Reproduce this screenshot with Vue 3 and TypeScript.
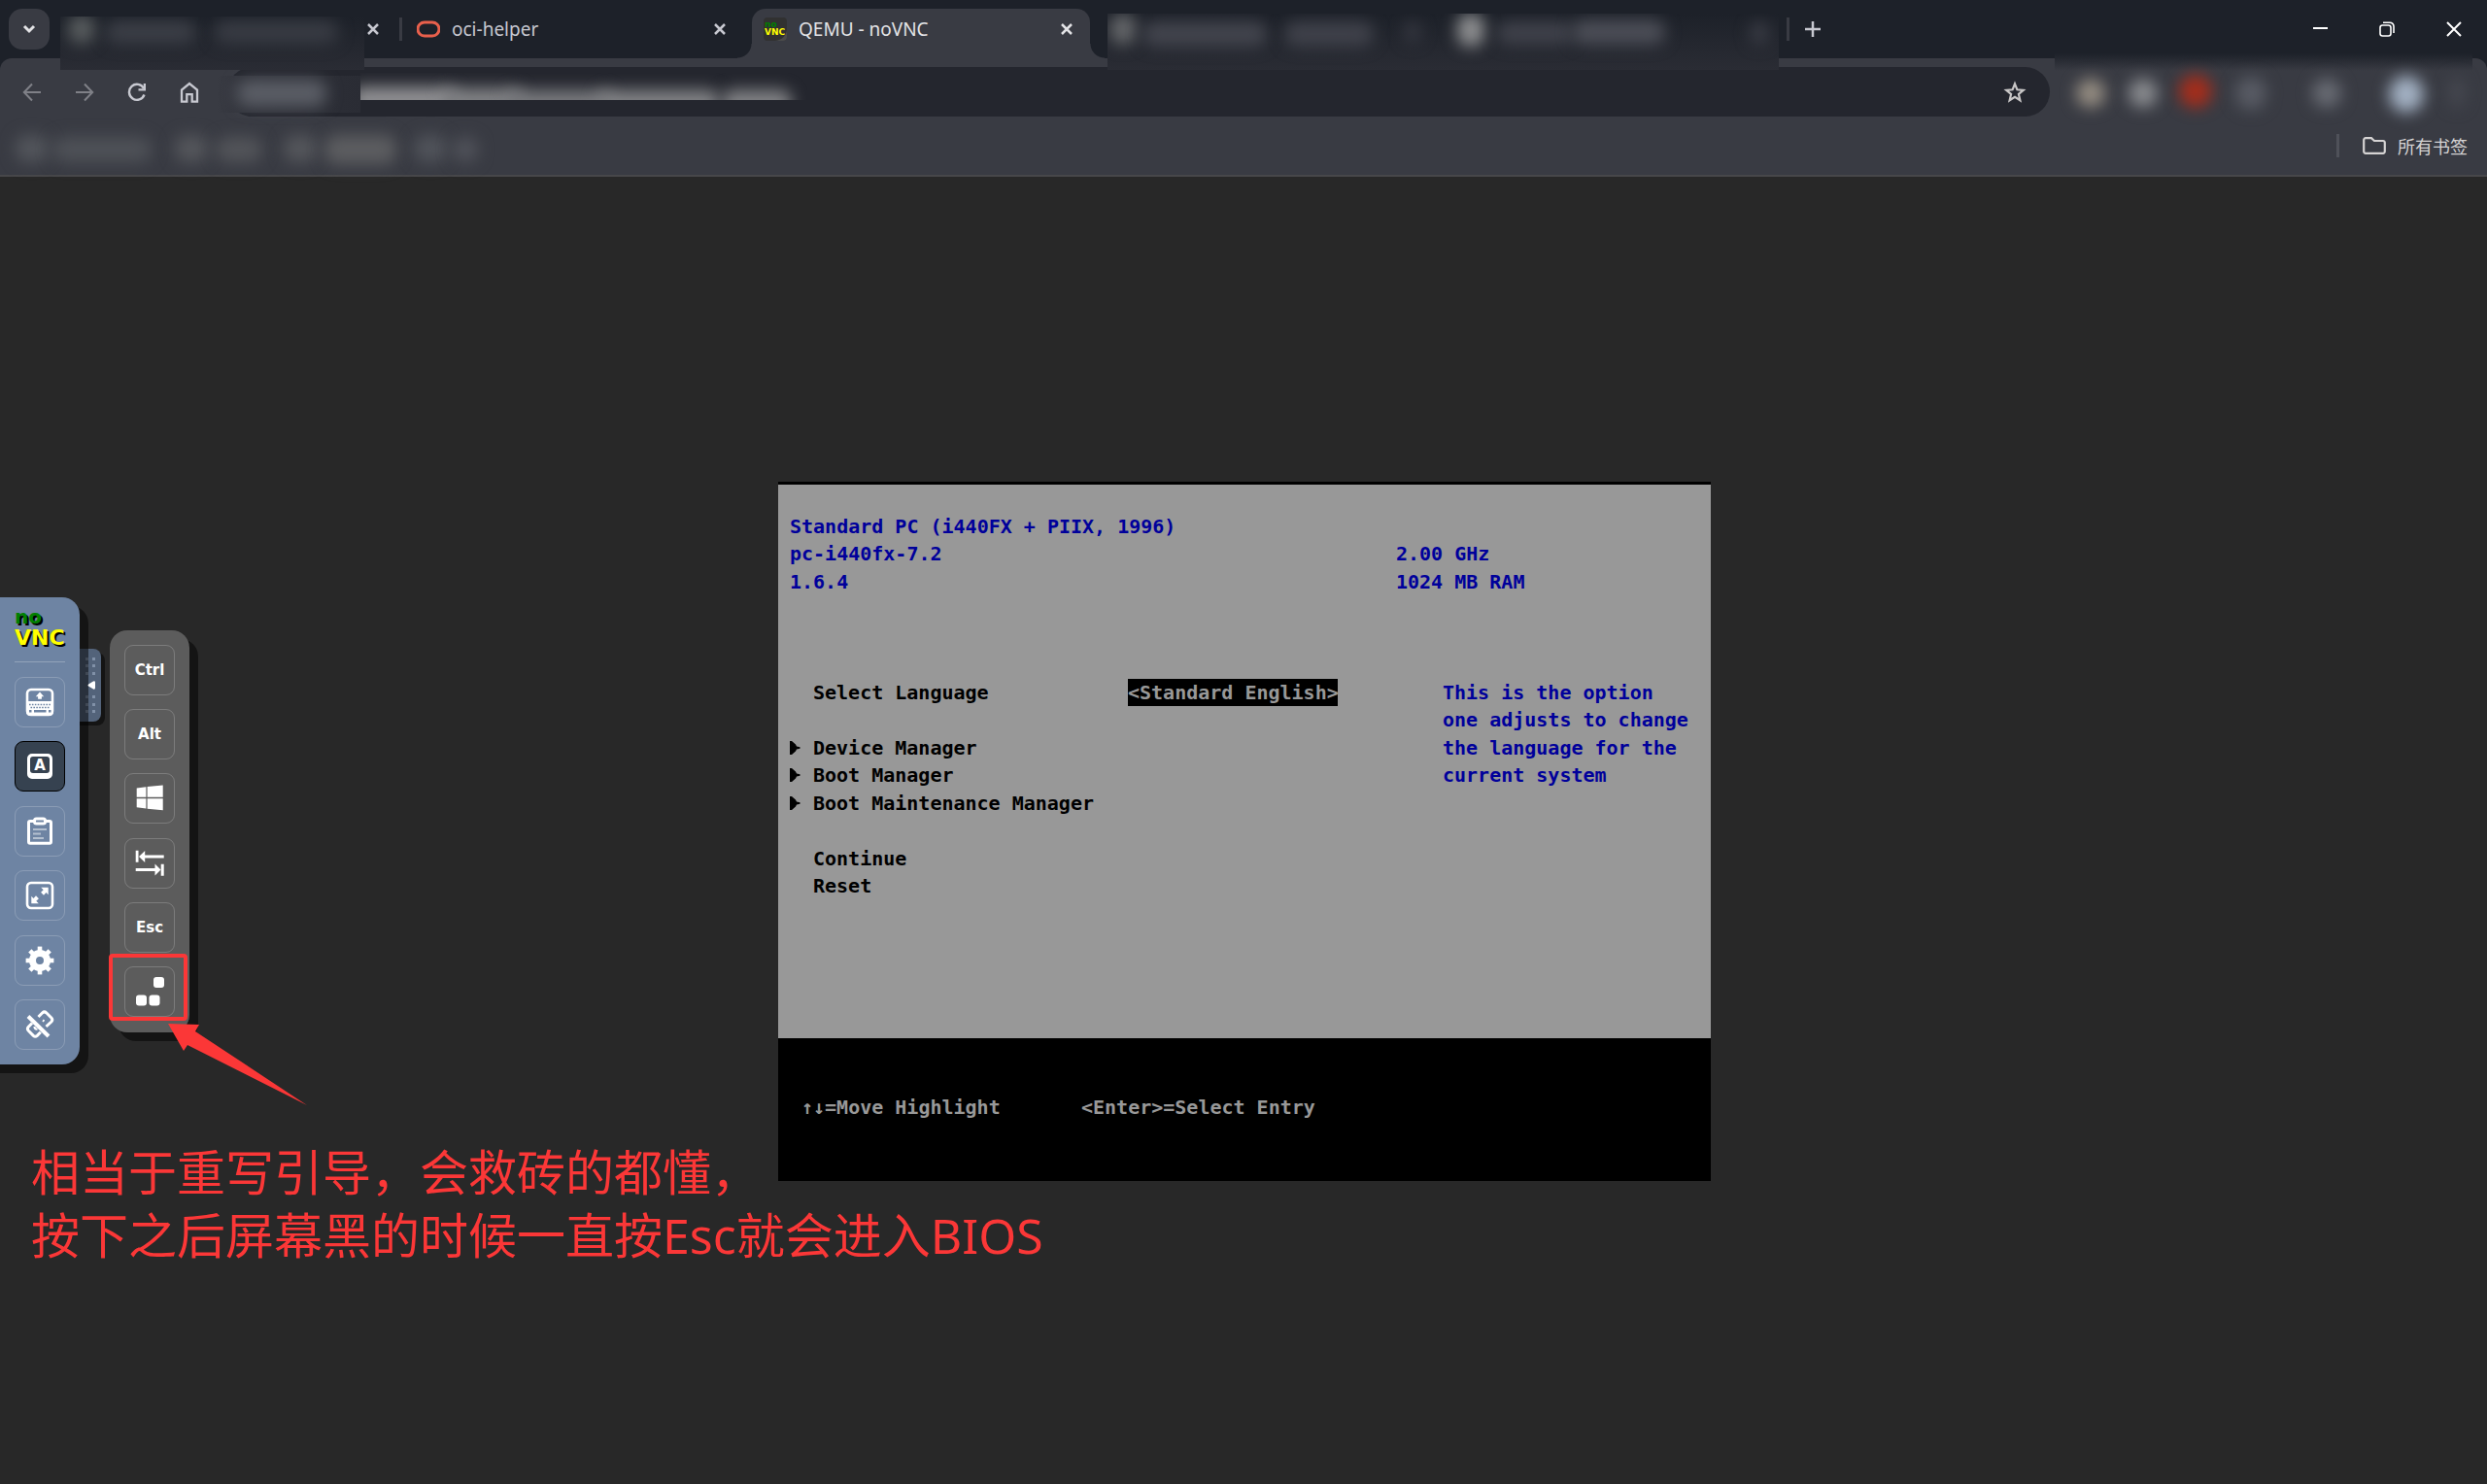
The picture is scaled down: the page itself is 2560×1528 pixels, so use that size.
<script setup lang="ts">
interface Tab {
  id: string
  title: string
  icon: 'none' | 'oracle' | 'novnc'
  active?: boolean
  separator?: boolean
  closable?: boolean
}

interface Cell {
  row: number
  col: number
  text: string
  tone: 'info' | 'item' | 'selected' | 'hint'
}

interface Smudge {
  left: number
  top: number
  width: number
  height: number
  color: string
}

const tabs: Tab[] = [
  { id: 'first', title: '', icon: 'none', separator: true, closable: true },
  { id: 'oci', title: 'oci-helper', icon: 'oracle', closable: true },
  { id: 'vnc', title: 'QEMU - noVNC', icon: 'novnc', active: true, closable: true },
  { id: 'fourth', title: '', icon: 'none' },
  { id: 'fifth', title: '', icon: 'none', separator: true },
]

const cells: Cell[] = [
  { row: 1, col: 1, text: 'Standard PC (i440FX + PIIX, 1996)', tone: 'info' },
  { row: 2, col: 1, text: 'pc-i440fx-7.2', tone: 'info' },
  { row: 2, col: 53, text: '2.00 GHz', tone: 'info' },
  { row: 3, col: 1, text: '1.6.4', tone: 'info' },
  { row: 3, col: 53, text: '1024 MB RAM', tone: 'info' },
  { row: 7, col: 3, text: 'Select Language', tone: 'item' },
  { row: 7, col: 30, text: '<Standard English>', tone: 'selected' },
  { row: 7, col: 57, text: 'This is the option', tone: 'info' },
  { row: 8, col: 57, text: 'one adjusts to change', tone: 'info' },
  { row: 9, col: 57, text: 'the language for the', tone: 'info' },
  { row: 10, col: 57, text: 'current system', tone: 'info' },
  { row: 9, col: 3, text: 'Device Manager', tone: 'item' },
  { row: 10, col: 3, text: 'Boot Manager', tone: 'item' },
  { row: 11, col: 3, text: 'Boot Maintenance Manager', tone: 'item' },
  { row: 13, col: 3, text: 'Continue', tone: 'item' },
  { row: 14, col: 3, text: 'Reset', tone: 'item' },
  { row: 22, col: 2, text: '↑↓=Move Highlight', tone: 'hint' },
  { row: 22, col: 26, text: '<Enter>=Select Entry', tone: 'hint' },
]

const markers: number[] = [9, 10, 11]

const firstTabSmudges: Smudge[] = [
  { left: 8, top: -2, width: 28, height: 30, color: '#575b5d' },
  { left: 46, top: 4, width: 94, height: 24, color: '#3b3e46' },
  { left: 158, top: 4, width: 128, height: 24, color: '#383b43' },
]

const lastTabsSmudges: Smudge[] = [
  { left: 2, top: 0, width: 28, height: 32, color: '#626467' },
  { left: 36, top: 8, width: 128, height: 26, color: '#42444d' },
  { left: 182, top: 8, width: 92, height: 26, color: '#3f414a' },
  { left: 306, top: 8, width: 16, height: 22, color: '#363841' },
  { left: 360, top: 0, width: 28, height: 34, color: '#8c8d8f' },
  { left: 400, top: 8, width: 80, height: 24, color: '#3f414a' },
  { left: 478, top: 6, width: 96, height: 26, color: '#4b4d56' },
  { left: 662, top: 8, width: 18, height: 24, color: '#3a3c45' },
]

const extensionSmudges: Smudge[] = [
  { left: 22, top: 26, width: 30, height: 30, color: '#958d82' },
  { left: 76, top: 26, width: 30, height: 30, color: '#898b8f' },
  { left: 128, top: 22, width: 34, height: 34, color: '#a52d1b' },
  { left: 186, top: 24, width: 32, height: 34, color: '#585b64' },
  { left: 265, top: 26, width: 30, height: 30, color: '#686b73' },
  { left: 344, top: 23, width: 36, height: 38, color: '#a2b0c2' },
  { left: 406, top: 24, width: 16, height: 32, color: '#474951' },
]

const bookmarkSmudges: Smudge[] = [
  { left: 4, top: 8, width: 34, height: 28, color: '#52555b' },
  { left: 42, top: 10, width: 102, height: 26, color: '#4e5157' },
  { left: 168, top: 8, width: 34, height: 28, color: '#54565b' },
  { left: 210, top: 10, width: 48, height: 26, color: '#525459' },
  { left: 280, top: 8, width: 34, height: 28, color: '#54565b' },
  { left: 322, top: 8, width: 74, height: 30, color: '#5c5d60' },
  { left: 414, top: 8, width: 34, height: 28, color: '#50535a' },
  { left: 454, top: 10, width: 26, height: 26, color: '#50525a' },
]

const addressSmudges: Smudge[] = [
  { left: -10, top: 14, width: 110, height: 28, color: '#8f8f92' },
  { left: 84, top: 15, width: 84, height: 28, color: '#808184' },
  { left: 150, top: 17, width: 110, height: 28, color: '#77787c' },
  { left: 244, top: 17, width: 126, height: 28, color: '#808184' },
  { left: 372, top: 17, width: 72, height: 28, color: '#808184' },
]

const dotRows: number[] = [9, 16, 24, 48, 56, 63]
const teeth: number[] = [0, 45, 90, 135, 180, 225, 270, 315]

function smudgeStyle(s: Smudge) {
  return {
    left: `${s.left}px`,
    top: `${s.top}px`,
    width: `${s.width}px`,
    height: `${s.height}px`,
    background: s.color,
  }
}

function cellStyle(c: Cell) {
  return { gridRow: `${c.row + 1}`, gridColumn: `${c.col + 1} / span ${c.text.length}` }
}
</script>

<template>
  <div class="window">
    <header class="browser">
      <div class="tabstrip">
        <button class="tab-search" aria-label="Search tabs">
          <svg width="14" height="10" viewBox="0 0 14 10"><path d="M2 2l5 5 5-5" fill="none" stroke="#e3e3e6" stroke-width="3" /></svg>
        </button>
        <div class="tabs">
          <div v-for="tab in tabs" :key="tab.id" class="tab" :class="{ active: tab.active, separated: tab.separator }">
            <svg v-if="tab.icon === 'oracle'" class="favicon" viewBox="0 0 24 24">
              <rect x="1" y="5" width="22" height="14" rx="7" fill="none" stroke="#e8604c" stroke-width="3" />
            </svg>
            <svg v-else-if="tab.icon === 'novnc'" class="favicon" viewBox="0 0 24 24">
              <rect width="24" height="24" rx="4" fill="#313131" />
              <path d="M24 13v7a4 4 0 0 1-4 4h-8c7-1 11-5 12-11z" fill="#4b4b4b" />
              <text x="1" y="10" class="mark-small" fill="#008000">no</text>
              <text x="1" y="18" class="mark-small" fill="#ffff00">VNC</text>
            </svg>
            <span v-else class="favicon"></span>
            <span class="tab-title">{{ tab.title }}</span>
            <button v-if="tab.closable" class="tab-close" aria-label="Close tab">
              <svg width="12" height="12" viewBox="0 0 12 12"><path d="M1 1l10 10M11 1L1 11" fill="none" stroke="currentColor" stroke-width="2.500" /></svg>
            </button>
          </div>
        </div>
        <button class="new-tab" aria-label="New tab">
          <svg width="16" height="16" viewBox="0 0 16 16"><path d="M8 0v16M0 8h16" stroke="#c7c8d0" stroke-width="2.500" /></svg>
        </button>
        <div class="window-controls">
          <button aria-label="Minimize">
            <svg width="16" height="16" viewBox="0 0 16 16"><path d="M1 7h15" stroke="#fff" stroke-width="2" /></svg>
          </button>
          <button aria-label="Restore">
            <svg width="16" height="16" viewBox="0 0 16 16" fill="none" stroke="#fff" stroke-width="1.600">
              <rect x="1" y="4" width="11" height="11" rx="2.500" />
              <path d="M4 1.200h7a4 4 0 0 1 4 4V12" />
            </svg>
          </button>
          <button aria-label="Close">
            <svg width="16" height="16" viewBox="0 0 16 16"><path d="M1 1l14 14M15 1L1 15" stroke="#fff" stroke-width="2" /></svg>
          </button>
        </div>
        <div class="veil veil-first"><i v-for="(s, i) in firstTabSmudges" :key="i" :style="smudgeStyle(s)"></i></div>
        <div class="veil veil-last"><i v-for="(s, i) in lastTabsSmudges" :key="i" :style="smudgeStyle(s)"></i></div>
      </div>

      <div class="toolbar">
        <button class="nav" aria-label="Back">
          <svg width="20" height="20" viewBox="0 0 20 20" fill="none" stroke="#7f8087" stroke-width="2"><path d="M19 10H2M10 1.500L1.800 10l8.200 8.500" /></svg>
        </button>
        <button class="nav" aria-label="Forward">
          <svg width="20" height="20" viewBox="0 0 20 20" fill="none" stroke="#7f8087" stroke-width="2"><path d="M1 10h17M10 1.500L18.200 10 10 18.500" /></svg>
        </button>
        <button class="nav" aria-label="Reload">
          <svg width="20" height="20" viewBox="0 0 20 20"><path d="M17.500 12.500A8 8 0 1 1 17 6" fill="none" stroke="#c7c8d0" stroke-width="2.400" /><path d="M19 1v7.500h-7.500V6.300h5.200V1z" fill="#c7c8d0" /></svg>
        </button>
        <button class="nav" aria-label="Home">
          <svg width="20" height="22" viewBox="0 0 20 22"><path d="M2 20.700V8.500L10 2l8 6.500v12.200h-5.300v-7.500H7.300v7.500z" fill="none" stroke="#c7c8d0" stroke-width="2.300" /></svg>
        </button>
        <div class="omnibox">
          <div class="site-veil"><i></i></div>
          <div class="address-veil"><i v-for="(s, i) in addressSmudges" :key="i" :style="smudgeStyle(s)"></i></div>
          <input class="address" type="text" aria-label="Address" />
          <button class="star" aria-label="Bookmark this tab">
            <svg width="24" height="24" viewBox="0 0 24 24"><path d="M12 3.300l2.400 6 6.400.5-4.900 4.200 1.500 6.300L12 16.900l-5.400 3.400L8.100 14 3.200 9.800l6.400-.5z" fill="none" stroke="#c8c6c6" stroke-width="2.200" /></svg>
          </button>
        </div>
        <div class="extensions"><i v-for="(s, i) in extensionSmudges" :key="i" :style="smudgeStyle(s)"></i></div>
      </div>

      <nav class="bookmarks">
        <div class="bookmark-veil"><i v-for="(s, i) in bookmarkSmudges" :key="i" :style="smudgeStyle(s)"></i></div>
        <a class="all-bookmarks" href="#">
          <svg width="24" height="18" viewBox="0 0 24 18"><path d="M1.200 3A1.800 1.800 0 0 1 3 1.200h6L12 4h9a1.800 1.800 0 0 1 1.800 1.800V15a1.800 1.800 0 0 1-1.800 1.800H3A1.800 1.800 0 0 1 1.200 15z" fill="none" stroke="#d5d3d3" stroke-width="2.200" /></svg>
          <span>所有书签</span>
        </a>
      </nav>
    </header>

    <main class="session">
      <section class="console" aria-label="Firmware setup">
        <span v-for="row in markers" :key="row" class="marker" :style="{ gridRow: `${row + 1}` }">
          <svg width="11" height="16" viewBox="0 0 11 16"><path d="M0 1h2l4 3.500 1 2 3.500.8v1.400L7 9.500l-1 2L2 15H0z" /></svg>
        </span>
        <span v-for="(c, i) in cells" :key="i" class="cell" :class="c.tone" :style="cellStyle(c)">{{ c.text }}</span>
      </section>

      <aside class="overlay">
        <div class="dock">
          <div class="control-bar">
            <div class="logo">
              <span class="logo-no">no</span>
              <span class="logo-vnc">VNC</span>
            </div>
            <div class="buttons">
              <button class="key" aria-label="Keyboard">
                <svg viewBox="0 0 30 30">
                  <rect x="2" y="2" width="26" height="26" rx="4" fill="none" stroke="#fff" stroke-width="2.600" />
                  <path d="M1 14h28v11a4 4 0 0 1-4 4H5a4 4 0 0 1-4-4z" fill="#fff" />
                  <path d="M15 4.500l4.200 4.700h-2.300v2.600h-3.800V9.200h-2.300z" fill="#fff" />
                  <path d="M4 17.500h23M5.500 20.500h20" stroke="#6e84a3" stroke-width="1.400" stroke-dasharray="1.600 1.300" />
                  <path d="M4 24.300h2.500M9 24.300h12.500M24 24.300h2.500" stroke="#6e84a3" stroke-width="2.400" />
                </svg>
              </button>
              <button class="key pressed" aria-label="Extra keys">
                <svg viewBox="0 0 30 30">
                  <path fill-rule="evenodd" d="M7 2h16a5 5 0 0 1 5 5v16a5 5 0 0 1-5 5H7a5 5 0 0 1-5-5V7a5 5 0 0 1 5-5zm1 3a3 3 0 0 0-3 3v11a3 3 0 0 0 3 3h14a3 3 0 0 0 3-3V8a3 3 0 0 0-3-3z" fill="#fff" />
                  <text x="15" y="19" class="key-letter">A</text>
                </svg>
              </button>
              <button class="key" aria-label="Clipboard">
                <svg viewBox="0 0 30 30" fill="none" stroke="#fff">
                  <rect x="3.500" y="4.500" width="23" height="22.800" rx="1.500" stroke-width="3" />
                  <rect x="9.500" y="2" width="11" height="5" rx="2" fill="#6e84a3" stroke-width="3" />
                  <path d="M8 13h14M8 17.500h8M8 22h11" stroke="#b4c0d0" stroke-width="2" />
                </svg>
              </button>
              <button class="key" aria-label="Fullscreen">
                <svg viewBox="0 0 30 30">
                  <rect x="2" y="2" width="26" height="26" rx="4" fill="none" stroke="#fff" stroke-width="2.600" />
                  <path d="M16.200 6.700h7.500v7.500l-2.200-2.200-2.500 2.700-2.900-2.900 2.600-2.600z" fill="#fff" />
                  <path d="M13.800 23.300H6.300v-7.500l2.200 2.200 2.500-2.700 2.900 2.900-2.600 2.600z" fill="#fff" />
                </svg>
              </button>
              <button class="key" aria-label="Settings">
                <svg viewBox="0 0 30 30">
                  <circle cx="15" cy="15" r="7.500" fill="none" stroke="#fff" stroke-width="7" />
                  <rect v-for="a in teeth" :key="a" x="12.700" y="0.600" width="4.600" height="5" fill="#fff" :transform="`rotate(${a} 15 15)`" />
                </svg>
              </button>
              <button class="key" aria-label="Disconnect">
                <svg viewBox="0 0 30 30" fill="none" stroke="#fff">
                  <path d="M13.500 7l4.200-4.200q2-1.800 4 0l5.200 5.200q1.800 2 0 4L21.500 17" stroke-width="3" />
                  <path d="M7 13.500l-3.700 3.800q-1.800 2 0 4l5 5q2 1.800 4 0l3.500-3.600" stroke-width="3" />
                  <path d="M18 10.500l1.500 1M9.500 17q0 3 3 2.500" stroke-width="2.200" />
                  <path d="M3 6.500l21 20.500" stroke-width="4" />
                </svg>
              </button>
            </div>
          </div>
          <button class="handle" aria-label="Hide control bar">
            <svg width="22" height="75" viewBox="0 0 22 75">
              <g fill="#8191a8">
                <template v-for="y in dotRows" :key="y">
                  <rect x="6" :y="y" width="3" height="3" />
                  <rect x="13" :y="y" width="3" height="3" />
                </template>
              </g>
            </svg>
          </button>
          <svg class="handle-arrow" width="8" height="9" viewBox="0 0 8 9"><path d="M1.500 3.200L6 .5q2-.8 2 1.200v5.600q0 2-2 1.200L1.500 5.800q-2-1.300 0-2.600z" fill="#fff" /></svg>
        </div>

        <div class="key-panel">
          <div class="buttons">
            <button class="key">Ctrl</button>
            <button class="key">Alt</button>
            <button class="key" aria-label="Windows">
              <svg viewBox="0 0 30 30" fill="#fff"><path d="M1.700 4.600l9.700-1.300v10.500H1.700zM12.600 3.100l16.100-1.700v12.400H12.600zM1.700 15.200h9.700v10.400l-9.700-1.300zM12.600 15.200h16.100v12l-16.100-1.500z" /></svg>
            </button>
            <button class="key" aria-label="Tab">
              <svg viewBox="0 0 30 30" fill="#fff"><path d="M.7 1.700h2.800v12H.7zM4 8l6.200-6v4.500h19.500v3H10.200V14zM26.700 15.700h3v12h-3zM26.500 21.500l-6-6v4.500H.7v3h19.800v4.500z" /></svg>
            </button>
            <button class="key">Esc</button>
            <button class="key" aria-label="Ctrl+Alt+Del">
              <svg viewBox="0 0 30 30" fill="#fff"><rect x="19" y="0" width="11" height="11" rx="3" /><rect x="1" y="18.500" width="11" height="11" rx="3" /><rect x="14.500" y="18.500" width="11" height="11" rx="3" /></svg>
            </button>
          </div>
          <div class="callout-box"></div>
          <svg class="callout-arrow" width="144" height="85" viewBox="0 0 144 85"><path d="M0 0l32 1-4 7 115 76L20 22l-4 6z" fill="#fb3737" /></svg>
        </div>
      </aside>

      <p class="note">相当于重写引导，会救砖的都懂，<br />按下之后屏幕黑的时候一直按Esc就会进入BIOS</p>
    </main>
  </div>
</template>

<style>
body {
  margin: 0;
  background: #282828;
}
</style>

<style scoped>
.window {
  display: flex;
  flex-direction: column;
  min-height: 100vh;
  overflow: hidden;
  background: #282828;
  font-family: "Noto Sans", "Noto Sans CJK SC", sans-serif;
}

button {
  padding: 0;
  border: 0;
  background: none;
  color: inherit;
  display: flex;
  align-items: center;
  justify-content: center;
}

.browser {
  background: #1d2129;
}

.tabstrip {
  position: relative;
  display: flex;
  align-items: center;
  height: 60px;
  padding-left: 9px;
}

.tab-search {
  width: 42px;
  height: 42px;
  border-radius: 14px;
  background: #393b43;
}

.tabs {
  display: flex;
  align-self: stretch;
  gap: 9px;
  padding: 9px 9px 0;
}

.tab {
  position: relative;
  display: flex;
  align-items: center;
  gap: 12px;
  width: 348px;
  box-sizing: border-box;
  padding: 0 18px 9px 12px;
  border-radius: 14px 14px 0 0;
  color: #c7c8d0;
  font-size: 19px;
  line-height: 24px;
}

.tab.active {
  background: #393b43;
  color: #e3e3e6;
}

.tab.active::before,
.tab.active::after {
  content: "";
  position: absolute;
  bottom: 0;
  width: 15px;
  height: 15px;
}

.tab.active::before {
  right: 100%;
  background: radial-gradient(circle at 0 0, transparent 14px, #393b43 15px);
}

.tab.active::after {
  left: 100%;
  background: radial-gradient(circle at 100% 0, transparent 14px, #393b43 15px);
}

.tab.separated::after {
  content: "";
  position: absolute;
  left: 351px;
  top: 9px;
  width: 3px;
  height: 24px;
  background: #393b43;
}

.favicon {
  width: 24px;
  height: 24px;
  flex: none;
}

.tab-title {
  flex: 1;
  white-space: nowrap;
}

.tab-close {
  width: 12px;
  height: 24px;
}

.new-tab {
  width: 42px;
  height: 42px;
}

.window-controls {
  display: flex;
  align-self: stretch;
  margin-left: auto;
}

.window-controls button {
  width: 69px;
}

.mark-small {
  font: bold 9px/9px "DejaVu Sans", sans-serif;
}

.veil {
  position: absolute;
  z-index: 2;
  overflow: hidden;
  background: linear-gradient(#1d2129 0, #24272f 30px, #2a2c34 100%);
}

.veil-first {
  left: 62px;
  top: 17px;
  width: 313px;
  height: 55px;
}

.veil-last {
  left: 1140px;
  top: 14px;
  width: 691px;
  height: 58px;
}

.veil i,
.extensions i,
.bookmark-veil i,
.address-veil i,
.site-veil i {
  position: absolute;
  border-radius: 12px;
  filter: blur(8px);
}

.toolbar {
  display: flex;
  align-items: center;
  height: 51px;
  padding: 9px 15px;
  border-radius: 12px 12px 0 0;
  background: #393b43;
}

.nav {
  width: 36px;
  height: 36px;
  margin-right: 18px;
}

.omnibox {
  position: relative;
  flex: 1;
  display: flex;
  align-items: center;
  height: 51px;
  margin-left: 3px;
  border-radius: 26px;
  background: #24262e;
}

.address {
  flex: 1;
  height: 36px;
  margin-left: 24px;
  border: 0;
  outline: 0;
  background: transparent;
  color: #e3e3e6;
  font: 18px/24px "Noto Sans", sans-serif;
}

.star {
  width: 36px;
  height: 36px;
  margin-right: 18px;
}

.site-veil {
  position: absolute;
  left: -10px;
  top: 9px;
  width: 147px;
  height: 38px;
  background: linear-gradient(90deg, #393b43 0, #30323a 30px, #2a2c34 100%);
}

.site-veil i {
  left: 20px;
  top: 4px;
  width: 92px;
  height: 28px;
  background: #5a5d65;
}

.address-veil {
  position: absolute;
  left: 137px;
  top: 6px;
  width: 460px;
  height: 28px;
  overflow: hidden;
}

.extensions {
  position: relative;
  width: 430px;
  height: 80px;
  margin: 0 0 0 5px;
  background: linear-gradient(#1d2129 0, #393b43 18px);
}

.extensions i {
  border-radius: 50%;
}

.bookmarks {
  display: flex;
  align-items: center;
  justify-content: space-between;
  height: 51px;
  padding: 0 20px 0 12px;
  border-bottom: 2px solid #47474a;
  background: #393b43;
}

.bookmark-veil {
  position: relative;
  width: 490px;
  height: 48px;
}

.all-bookmarks {
  display: flex;
  align-items: center;
  gap: 12px;
  height: 24px;
  margin-bottom: 9px;
  padding-left: 24px;
  border-left: 3px solid #4f5159;
  color: #d5d3d3;
  font: 18px/24px "Noto Sans CJK SC", sans-serif;
  text-decoration: none;
}

.session {
  position: relative;
  flex: 1;
  display: flex;
  align-items: center;
  justify-content: center;
  padding: 2px 0 0 2px;
}

.console {
  display: grid;
  grid-template-columns: repeat(80, 12px);
  grid-template-rows: repeat(25, 1fr);
  width: 960px;
  height: 713px;
  padding: 3px 0 4px;
  background: linear-gradient(#000 3px, #989898 3px, #989898 573px, #000 573px);
  font: bold 20px/28px "DejaVu Sans Mono", monospace;
}

.cell {
  white-space: pre;
}

.info {
  color: #00009b;
}

.item {
  color: #000;
}

.selected {
  background: #000;
  color: #989898;
}

.hint {
  color: #989898;
}

.marker {
  grid-column: 2;
  display: flex;
  align-items: center;
}

.overlay {
  position: absolute;
  left: 0;
  top: 1px;
  bottom: 0;
  display: flex;
  align-items: center;
  gap: 31px;
}

.dock {
  position: relative;
  isolation: isolate;
}

.control-bar {
  position: relative;
  z-index: 1;
  width: 102px;
  box-sizing: border-box;
  margin-left: -20px;
  padding: 0 15px 15px 35px;
  border-radius: 0 18px 18px 0;
  background: #6e84a3;
  box-shadow: 9px 9px 0 rgba(0, 0, 0, 0.5);
}

.logo {
  display: flex;
  flex-direction: column;
  padding: 9px 0 13px;
  font: bold 20px/22px "DejaVu Sans", sans-serif;
  text-shadow: 2px 2px 0 #000;
}

.logo-no {
  color: #008000;
}

.logo-vnc {
  color: #ffff00;
  font-size: 22px;
}

.buttons {
  display: flex;
  flex-direction: column;
  justify-content: space-between;
  height: 384px;
}

.control-bar .buttons {
  padding-top: 15px;
  border-top: 1px solid #92a3ba;
}

.key {
  width: 52px;
  height: 52px;
  box-sizing: border-box;
  border: 1px solid rgba(255, 255, 255, 0.2);
  border-radius: 9px;
  color: #fff;
  font: bold 15px/24px "DejaVu Sans", sans-serif;
}

.key svg {
  width: 30px;
  height: 30px;
}

.key.pressed {
  border-color: #000;
  background: #364250;
}

.key-letter {
  fill: #fff;
  font-size: 15px;
  text-anchor: middle;
}

.handle {
  position: absolute;
  z-index: 0;
  left: 64px;
  top: 53px;
  width: 40px;
  height: 75px;
  padding-left: 18px;
  border-radius: 0 8px 8px 0;
  background: #53637a;
  box-shadow: 4px 4px 0 rgba(0, 0, 0, 0.5);
}

.handle-arrow {
  position: absolute;
  z-index: 2;
  left: 90px;
  top: 86px;
}

.key-panel {
  position: relative;
  padding: 15px;
  border-radius: 18px;
  background: #5c5c5c;
  box-shadow: 9px 9px 0 rgba(0, 0, 0, 0.5);
}

.callout-box {
  position: absolute;
  left: -1px;
  bottom: 12px;
  width: 73px;
  height: 61px;
  border: 4px solid #fb3737;
  border-radius: 4px;
}

.callout-arrow {
  position: absolute;
  left: 60px;
  top: 405px;
}

.note {
  position: absolute;
  left: 32px;
  top: calc(50% + 320px);
  margin: 0;
  color: #fb3737;
  font: 50px/65px "Noto Sans", "Noto Sans CJK SC", sans-serif;
  white-space: nowrap;
}
</style>
